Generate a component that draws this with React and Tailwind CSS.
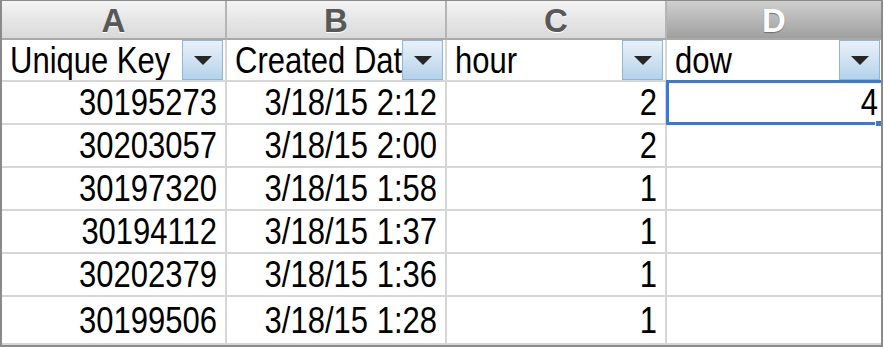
import React from "react";

const font = { fontFamily: '"Liberation Sans", Arial, sans-serif' };

const rows = [
  ["30195273", "3/18/15 2:12", "2", "4"],
  ["30203057", "3/18/15 2:00", "2", ""],
  ["30197320", "3/18/15 1:58", "1", ""],
  ["30194112", "3/18/15 1:37", "1", ""],
  ["30202379", "3/18/15 1:36", "1", ""],
  ["30199506", "3/18/15 1:28", "1", ""],
];

const headers = ["Unique Key", "Created Date", "hour", "dow"];
const letters = ["A", "B", "C", "D"];

function FilterButton({ last }) {
  return (
    <div
      className={
        "absolute top-0 h-[40px] w-[41px] border border-[#8fb6da] bg-gradient-to-b from-[#e9f1f9] via-[#d0e2f1] to-[#b4d2ea] flex items-center justify-center " +
        (last ? "right-[1px]" : "right-[2px]")
      }
    >
      <svg width="20" height="12" viewBox="0 0 20 12">
        <polygon points="1,2 19,2 10,11" fill="#262626" />
      </svg>
    </div>
  );
}

function CellText({ children }) {
  return (
    <span className="inline-block text-[31px] leading-none text-black whitespace-nowrap scale-y-[1.17] origin-center">
      {children}
    </span>
  );
}

export default function App() {
  return (
    <div className="w-[884px] h-[347px] bg-white">
      <div
        className="w-[883px] h-[347px] border-x-2 border-t border-b-2 border-[#8a8a8a] overflow-hidden grid grid-cols-[225px_220px_220px_214px] grid-rows-[39px_42px_43px_43px_43px_43px_43px_1fr]"
        style={font}
      >
        {letters.map((l, i) => {
          const sel = l === "D";
          return (
            <div
              key={l}
              className={
                "flex items-center justify-center border-b-2 border-[#a9a9a9] " +
                (i < 3 ? "border-r-2 border-r-[#b5b5b5] " : "") +
                (sel
                  ? "bg-gradient-to-b from-[#cfcfcf] to-[#a0a0a0]"
                  : "bg-gradient-to-b from-[#f4f4f4] to-[#d9d9d9]")
              }
            >
              <span
                className={
                  "text-[33px] font-bold leading-none pt-[2px] " +
                  (sel ? "text-white [text-shadow:0_1px_1px_#6e6e6e]" : "text-[#585858] [text-shadow:0_1px_0_#ffffff]")
                }
              >
                {l}
              </span>
            </div>
          );
        })}

        {headers.map((h, i) => (
          <div
            key={h}
            className={
              "relative overflow-hidden border-b-2 border-[#d6d6d6] flex items-center pl-[8px] " +
              (i < 3 ? "border-r-2 border-r-[#d6d6d6]" : "")
            }
          >
            <CellText>{h}</CellText>
            <FilterButton last={i === 3} />
          </div>
        ))}

        {rows.map((r, ri) =>
          r.map((v, ci) => (
            <div
              key={ri + "-" + ci}
              className={
                "relative flex items-center justify-end border-b-2 border-[#d6d6d6] " +
                (ci < 3 ? "pr-[8px] border-r-2 border-r-[#d6d6d6]" : "pr-[3px]")
              }
            >
              <CellText>{v}</CellText>
              {ri === 0 && ci === 3 && (
                <>
                  <div className="absolute -left-[1px] -top-[2px] -right-[4px] -bottom-[2px] border-[3px] border-[#3b79d3]" />
                  <div className="absolute -right-[1px] -bottom-[4px] w-[7px] h-[7px] bg-[#3b79d3] border border-white" />
                </>
              )}
            </div>
          ))
        )}

        {[0, 1, 2, 3].map((ci) => (
          <div key={"tail" + ci} className={ci < 3 ? "border-r-2 border-r-[#d6d6d6]" : ""} />
        ))}
      </div>
    </div>
  );
}
